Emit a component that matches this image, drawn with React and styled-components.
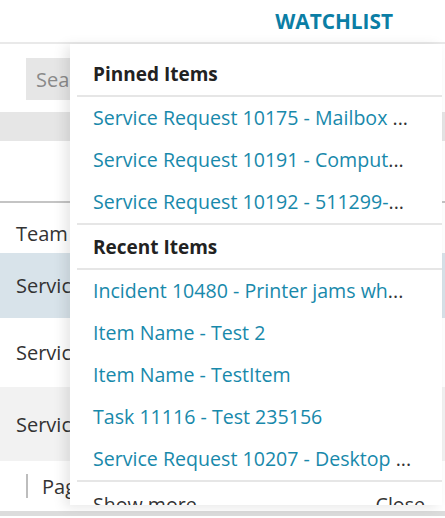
import React from "react";
import styled, { createGlobalStyle } from "styled-components";

const GlobalStyle = createGlobalStyle`
  html, body {
    margin: 0;
    padding: 0;
    background: #ffffff;
    font-family: "Open Sans", "Noto Sans", sans-serif;
    overflow: hidden;
  }
  * { box-sizing: border-box; }
`;

const Page = styled.div`
  position: relative;
  width: 445px;
  height: 518px;
  overflow: hidden;
  display: flex;
  flex-direction: column;
`;

const TopBar = styled.div`
  height: 44px;
  display: flex;
  align-items: center;
  justify-content: flex-end;
  padding-right: 52px;
  border-bottom: 2px solid #e9e9e9;
`;

const WatchlistLink = styled.a`
  font-size: 20.8px;
  font-weight: 700;
  color: #0b7ea5;
  text-transform: uppercase;
  cursor: pointer;
`;

const SearchRow = styled.div`
  padding: 14px 0 0 26px;
`;

const SearchInput = styled.input`
  width: 300px;
  height: 42px;
  border: none;
  background: #e6e6e6;
  padding: 0 10px;
  font-family: inherit;
  font-size: 20px;
  color: #333;
  &::placeholder { color: #8a8a8a; }
`;

const FilterBand = styled.div`
  margin-top: 12px;
  height: 29px;
  background: #e6e6e6;
`;

const Spacer = styled.div`
  height: ${(p) => p.h}px;
`;

const Table = styled.div`
  border-top: 2px solid #c4c4c4;
`;

const HeadCell = styled.div`
  height: 50px;
  padding: 10px 16px 0;
  display: flex;
  align-items: center;
  font-size: 20px;
  color: #333;
`;

const Row = styled.div`
  height: ${(p) => p.h}px;
  display: flex;
  align-items: center;
  padding: 0 16px;
  font-size: 20px;
  color: #333;
  white-space: nowrap;
  background: ${(p) => p.bg};
`;

const Pager = styled.div`
  height: 50px;
  display: flex;
  align-items: center;
  padding-left: 26px;
  font-size: 20px;
  color: #333;
  gap: 14px;
`;

const PagerBar = styled.span`
  width: 2px;
  height: 24px;
  background: #bdbdbd;
`;

const BottomBand = styled.div`
  height: 5px;
  background: #dcdcdc;
`;

const Dropdown = styled.div`
  position: absolute;
  top: 44px;
  left: 70px;
  width: 372px;
  height: 461px;
  background: #ffffff;
  box-shadow: -5px 2px 12px rgba(0, 0, 0, 0.1);
  padding: 8px 0 0 7px;
  overflow: hidden;
`;

const SectionTitle = styled.div`
  height: 45px;
  display: flex;
  align-items: center;
  padding-left: 16px;
  font-size: 19px;
  font-weight: 700;
  color: #222;
  border-bottom: 2px solid #e6e6e6;
`;

const List = styled.ul`
  list-style: none;
  margin: 0;
  padding: 0;
  border-bottom: 2px solid #e6e6e6;
`;

const Item = styled.li`
  height: 42px;
  line-height: 42px;
  padding: 0 16px;
  white-space: pre;
  overflow: hidden;
  font-size: 19.6px;
  color: #333;

  a {
    color: #1889ab;
    text-decoration: none;
    cursor: pointer;
  }
`;

const Footer = styled.div`
  height: 44px;
  display: flex;
  align-items: center;
  justify-content: space-between;
  padding: 0 17px 0 16px;
  font-size: 19.6px;
  color: #333;
`;

const pinned = [
  { label: "Service Request 10175 - Mailbox ", cut: true },
  { label: "Service Request 10191 - Comput", cut: true },
  { label: "Service Request 10192 - 511299-", cut: true },
];

const recent = [
  { label: "Incident 10480 - Printer jams wh", cut: true },
  { label: "Item Name - Test 2" },
  { label: "Item Name - TestItem" },
  { label: "Task 11116 - Test 235156" },
  { label: "Service Request 10207 - Desktop ", cut: true },
];

const WatchItem = ({ item }) => (
  <Item>
    <a>{item.label}</a>
    {item.cut && "..."}
  </Item>
);

export default function App() {
  return (
    <Page>
      <GlobalStyle />
      <TopBar>
        <WatchlistLink>Watchlist</WatchlistLink>
      </TopBar>
      <SearchRow>
        <SearchInput placeholder="Search" />
      </SearchRow>
      <FilterBand />
      <Spacer h={60} />
      <Table>
        <HeadCell>Team</HeadCell>
        <Row h={65} bg="#d8e3ea">Service Desk</Row>
        <Row h={69} bg="#ffffff">Service Desk</Row>
        <Row h={74} bg="#f2f2f2">Service Desk</Row>
      </Table>
      <Pager>
        <PagerBar />
        <span>Page 1 of 1</span>
      </Pager>
      <BottomBand />

      <Dropdown>
        <SectionTitle>Pinned Items</SectionTitle>
        <List>
          {pinned.map((t) => (
            <WatchItem key={t.label} item={t} />
          ))}
        </List>
        <SectionTitle>Recent Items</SectionTitle>
        <List>
          {recent.map((t) => (
            <WatchItem key={t.label} item={t} />
          ))}
        </List>
        <Footer>
          <span>Show more</span>
          <span>Close</span>
        </Footer>
      </Dropdown>
    </Page>
  );
}
